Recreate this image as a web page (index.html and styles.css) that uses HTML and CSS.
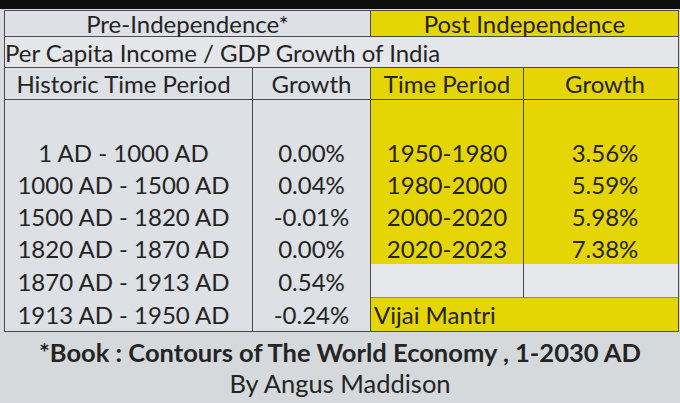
FILE: index.html
```html
<!DOCTYPE html>
<html>
<head>
<meta charset="utf-8">
<link rel="stylesheet" href="styles.css">
</head>
<body>
<div class="top-bar"></div>
<div class="sheet">
  <div class="c title span2">Pre-Independence*</div>
  <div class="c title span2 y">Post Independence</div>
  <div class="c subtitle span4">Per Capita Income / GDP Growth of India</div>
  <div class="c h period">Historic Time Period</div>
  <div class="c h">Growth</div>
  <div class="c h y">Time Period</div>
  <div class="c h y val">Growth</div>

  <div class="c b"></div><div class="c b"></div><div class="c b y"></div><div class="c b y"></div>

  <div class="c b period">1 AD - 1000 AD</div><div class="c b">0.00%</div><div class="c b y">1950-1980</div><div class="c b y val">3.56%</div>
  <div class="c b period">1000 AD - 1500 AD</div><div class="c b">0.04%</div><div class="c b y">1980-2000</div><div class="c b y val">5.59%</div>
  <div class="c b period">1500 AD - 1820 AD</div><div class="c b">-0.01%</div><div class="c b y">2000-2020</div><div class="c b y val">5.98%</div>
  <div class="c b period">1820 AD - 1870 AD</div><div class="c b">0.00%</div><div class="c b y">2020-2023</div><div class="c b y val">7.38%</div>
  <div class="c b period">1870 AD - 1913 AD</div><div class="c b">0.54%</div><div class="c w"></div><div class="c w"></div>
  <div class="c last period">1913 AD - 1950 AD</div><div class="c last">-0.24%</div><div class="c last y span2 author">Vijai Mantri</div>
</div>
<div class="footer">
  <div class="book">*Book : Contours of The World Economy , 1-2030 AD</div>
  <div class="by">By Angus Maddison</div>
</div>
</body>
</html>
```
FILE: styles.css
```css
html, body {
  margin: 0;
  padding: 0;
}
body {
  width: 680px;
  height: 403px;
  overflow: hidden;
  background: #d8dbdf;
  font-family: Lato, "Open Sans", sans-serif;
  color: #242424;
}
.top-bar {
  height: 9px;
  background: #0e0e0e;
}
.sheet {
  margin-top: 1px;
  margin-left: 4px;
  width: 674px;
  display: grid;
  grid-template-columns: 248px 118px 153px 155px;
  grid-template-rows: 26px 31px 32px 36px 32px 32px 32px 32px 34px 34px;
  border-left: 1px solid #4a4a4a;
  border-top: 1px solid #4a4a4a;
  background: #dde0e4;
}
.c {
  box-sizing: border-box;
  border-right: 1px solid #4a4a4a;
  border-bottom: 1px solid #4a4a4a;
  display: flex;
  align-items: center;
  justify-content: center;
  font-size: 24px;
  white-space: nowrap;
}
.span2 { grid-column: span 2; }
.span4 { grid-column: span 4; }
.y { background: #e6d504; }
.w { background: #e6e8ec; border-bottom: 1px solid #8a8a7a; }
.title { font-size: 24px; }
.subtitle {
  justify-content: flex-start;
  background: #e4e6ea;
  font-size: 24px;
}
.b { border-bottom: none; }
.period { padding-right: 10px; }
.val { padding-left: 8px; }
.author { justify-content: flex-start; padding-left: 3px; }
.footer {
  height: 70px;
  display: flex;
  flex-direction: column;
  align-items: center;
  background: #d6d9dc;
}
.book {
  font-weight: 700;
  font-size: 25.5px;
  line-height: 31px;
  margin-top: 5px;
}
.by {
  font-size: 25.5px;
  line-height: 31px;
}
```
